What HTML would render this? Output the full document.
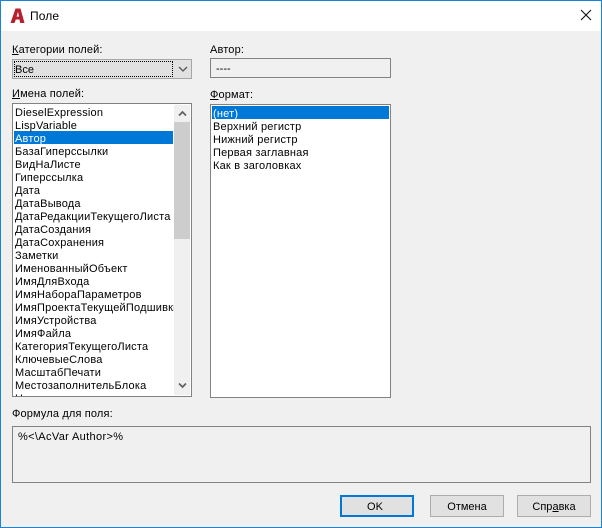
<!DOCTYPE html>
<html><head><meta charset="utf-8"><style>
html,body{margin:0;padding:0;width:602px;height:528px;overflow:hidden;background:#f0f0f0}
*{box-sizing:border-box}
body{font:11px/13px "Liberation Sans",sans-serif;color:#000;position:relative}
.a{position:absolute;white-space:nowrap}
u{text-underline-offset:1px}
.it{position:absolute;height:13px;line-height:13px;white-space:nowrap;letter-spacing:.2px}
.btn{position:absolute;top:495px;width:74px;height:22px;background:#e1e1e1;border:1px solid #adadad;text-align:center;line-height:22px;font-size:11px}
</style></head><body>
<div class="a" style="left:0;top:0;width:602px;height:528px;border:1px solid #1883d7"></div>
<div class="a" style="left:1px;top:1px;width:600px;height:30px;background:#fff"></div>
<svg class="a" style="left:10px;top:8px" width="15" height="15" viewBox="0 0 15 15"><path d="M0.5 15 L5.5 0.5 H10.5 L14.5 15 H10.2 L9.5 11.5 H5.8 L4.5 15Z M6.6 8.6 H9 L8 3.8Z" fill="#b5212c" fill-rule="evenodd"/></svg>
<div class="a" style="left:30px;top:9px;font-size:12px;line-height:15px;letter-spacing:.1px">Поле</div>
<svg class="a" style="left:580px;top:9px" width="12" height="12" viewBox="0 0 12 12"><path d="M1 1L11 11M11 1L1 11" stroke="#111" stroke-width="1.1" fill="none"/></svg>

<div class="a" style="left:12px;top:44px;letter-spacing:.15px"><u>К</u>атегории полей:</div>
<div class="a" style="left:12px;top:59px;width:180px;height:20px;background:#e1e1e1;border:1px solid #a6a6a6"></div>
<div class="a" style="left:14px;top:61px;width:159px;height:16px;border:1px dotted #000"></div>
<div class="a" style="left:15px;top:64px;line-height:13px">Все</div>
<svg class="a" style="left:178px;top:66px" width="10" height="7" viewBox="0 0 10 7"><path d="M1 1L5 5L9 1" stroke="#555" stroke-width="1.3" fill="none"/></svg>

<div class="a" style="left:12px;top:88px;letter-spacing:.15px"><u>И</u>мена полей:</div>
<div class="a" style="left:12px;top:103px;width:180px;height:294px;background:#fff;border:1px solid #828282;overflow:hidden">
<div style="position:absolute;left:1px;top:27px;width:159px;height:13px;background:#0078d7"></div>
<div class="it" style="left:2px;top:3px">DieselExpression</div>
<div class="it" style="left:2px;top:16px">LispVariable</div>
<div class="it" style="left:2px;top:29px;color:#fff">Автор</div>
<div class="it" style="left:2px;top:42px">БазаГиперссылки</div>
<div class="it" style="left:2px;top:55px">ВидНаЛисте</div>
<div class="it" style="left:2px;top:68px">Гиперссылка</div>
<div class="it" style="left:2px;top:81px">Дата</div>
<div class="it" style="left:2px;top:94px">ДатаВывода</div>
<div class="it" style="left:2px;top:107px">ДатаРедакцииТекущегоЛиста</div>
<div class="it" style="left:2px;top:120px">ДатаСоздания</div>
<div class="it" style="left:2px;top:133px">ДатаСохранения</div>
<div class="it" style="left:2px;top:146px">Заметки</div>
<div class="it" style="left:2px;top:159px">ИменованныйОбъект</div>
<div class="it" style="left:2px;top:172px">ИмяДляВхода</div>
<div class="it" style="left:2px;top:185px">ИмяНабораПараметров</div>
<div class="it" style="left:2px;top:198px">ИмяПроектаТекущейПодшивки</div>
<div class="it" style="left:2px;top:211px">ИмяУстройства</div>
<div class="it" style="left:2px;top:224px">ИмяФайла</div>
<div class="it" style="left:2px;top:237px">КатегорияТекущегоЛиста</div>
<div class="it" style="left:2px;top:250px">КлючевыеСлова</div>
<div class="it" style="left:2px;top:263px">МасштабПечати</div>
<div class="it" style="left:2px;top:276px">МестозаполнительБлока</div>
<div class="it" style="left:2px;top:289px">Название</div>
<div style="position:absolute;left:161px;top:1px;width:16px;height:290px;background:#f0f0f0"></div>
<div style="position:absolute;left:161px;top:18px;width:16px;height:117px;background:#cdcdcd"></div>
<svg style="position:absolute;left:165px;top:6px" width="9" height="7" viewBox="0 0 9 7"><path d="M1 5.5L4.5 2L8 5.5" stroke="#606060" stroke-width="1.7" fill="none"/></svg>
<svg style="position:absolute;left:165px;top:278px" width="9" height="7" viewBox="0 0 9 7"><path d="M1 1.5L4.5 5L8 1.5" stroke="#606060" stroke-width="1.7" fill="none"/></svg>
</div>

<div class="a" style="left:210px;top:44px;letter-spacing:.15px">Автор:</div>
<div class="a" style="left:210px;top:58px;width:181px;height:20px;border:1px solid #828282"></div>
<div class="a" style="left:216px;top:63px">----</div>

<div class="a" style="left:210px;top:89px;letter-spacing:.15px"><u>Ф</u>ормат:</div>
<div class="a" style="left:210px;top:104px;width:181px;height:294px;background:#fff;border:1px solid #828282"></div>
<div class="a" style="left:212px;top:106px;width:177px;height:13px;background:#0078d7"></div>
<div class="it" style="left:213px;top:108px;color:#fff">(нет)</div>
<div class="it" style="left:213px;top:121px">Верхний регистр</div>
<div class="it" style="left:213px;top:134px">Нижний регистр</div>
<div class="it" style="left:213px;top:147px">Первая заглавная</div>
<div class="it" style="left:213px;top:160px">Как в заголовках</div>

<div class="a" style="left:12px;top:408px;letter-spacing:.15px">Формула для поля:</div>
<div class="a" style="left:12px;top:426px;width:579px;height:57px;border:1px solid #828282"></div>
<div class="a" style="left:18px;top:431px;letter-spacing:.35px">%&lt;\AcVar Author&gt;%</div>

<div class="btn" style="left:340px;border:2px solid #0078d7;line-height:20px;padding-right:4px">OK</div>
<div class="btn" style="left:430px">Отмена</div>
<div class="btn" style="left:517px">Спр<u>а</u>вка</div>
</body></html>
